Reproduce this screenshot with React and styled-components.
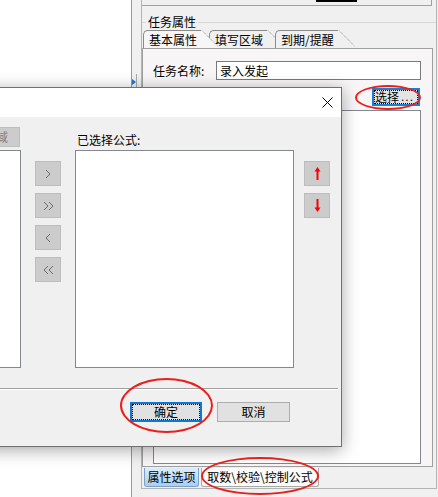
import React from "react";
import styled, { createGlobalStyle } from "styled-components";

const GlobalStyle = createGlobalStyle`
  html, body {
    margin: 0;
    padding: 0;
    background: #fff;
    overflow: hidden;
  }
  body {
    font-family: "Noto Sans CJK SC", "Liberation Sans", sans-serif;
    font-size: 12px;
    color: #000;
  }
`;

const Chevron = ({ dir = "right", double }) => {
  const one = (x) =>
    dir === "right" ? `M${x} 1 L${x + 4} 5 L${x} 9` : `M${x + 4} 1 L${x} 5 L${x + 4} 9`;
  return (
    <svg width={double ? 11 : 6} height="10" viewBox={`0 0 ${double ? 11 : 6} 10`}>
      <path d={one(1)} fill="none" stroke="#6b6b6b" strokeWidth="1" />
      {double && <path d={one(6)} fill="none" stroke="#6b6b6b" strokeWidth="1" />}
    </svg>
  );
};

const RedArrow = ({ down }) => (
  <svg width="7" height="13" viewBox="0 0 7 13" style={down ? { transform: "scaleY(-1)" } : null}>
    <polygon points="3.5,0 6.5,4.5 0.5,4.5" fill="#ff0000" />
    <rect x="2.5" y="3" width="2" height="10" fill="#ff0000" />
  </svg>
);

const TabSlant = ({ bg }) => (
  <svg width="17" height="18" viewBox="0 0 17 18">
    <polygon points="0,0 1,0 17,17 17,18 0,18" fill={bg} />
    <path d="M1 0.5 L17 16.5" stroke="#8a8a8a" strokeWidth="1" strokeDasharray="1 1" />
  </svg>
);

export default function App() {
  return (
    <Screen>
      <GlobalStyle />
      <Canvas />
      <Splitter>
        <Handle>
          <svg width="4" height="6" viewBox="0 0 4 6">
            <polygon points="0,0 4,3 0,6" fill="#1f74d4" />
          </svg>
        </Handle>
      </Splitter>

      <SidePanel>
        <OuterFrame>
          <TopBox>
            <Bar />
          </TopBox>
          <Group>
            <Legend>任务属性</Legend>
            <TabStrip>
              <Tab active first>
                <TabLabel active>基本属性</TabLabel>
                <TabSlant bg="#f7f5f6" />
              </Tab>
              <Tab>
                <TabLabel>填写区域</TabLabel>
                <TabSlant bg="#f0f0f0" />
              </Tab>
              <Tab>
                <TabLabel>到期/提醒</TabLabel>
                <TabSlant bg="#f0f0f0" />
              </Tab>
            </TabStrip>
            <TabPanel>
              <FieldRow>
                <FieldLabel>任务名称:</FieldLabel>
                <TextBox>录入发起</TextBox>
              </FieldRow>
              <ActionRow>
                <FocusButton>选择<Dots>...</Dots></FocusButton>
              </ActionRow>
              <FormulaList />
            </TabPanel>
          </Group>
          <BottomTabs>
            <BottomTab active w={55}>属性选项</BottomTab>
            <BottomTab w={118}>取数\校验\控制公式</BottomTab>
          </BottomTabs>
        </OuterFrame>
      </SidePanel>

      <Dialog>
        <TitleBar>
          <svg width="11" height="11" viewBox="0 0 11 11">
            <path d="M0.5 0.5 L10.5 10.5 M10.5 0.5 L0.5 10.5" stroke="#000" strokeWidth="1" />
          </svg>
        </TitleBar>
        <DialogBody>
          <Column w={206}>
            <ColumnHead align="flex-end">
              <DisabledButton>选择区域</DisabledButton>
            </ColumnHead>
            <ListBox />
          </Column>
          <ArrowColumn gap={14}>
            <ArrowButton><Chevron /></ArrowButton>
            <ArrowButton><Chevron double /></ArrowButton>
            <ArrowButton><Chevron dir="left" /></ArrowButton>
            <ArrowButton><Chevron dir="left" double /></ArrowButton>
          </ArrowColumn>
          <Column w={219} gap={14}>
            <ColumnHead>
              <HeadLabel>已选择公式:</HeadLabel>
            </ColumnHead>
            <ListBox />
          </Column>
          <ArrowColumn gap={10}>
            <ArrowButton><RedArrow /></ArrowButton>
            <ArrowButton><RedArrow down /></ArrowButton>
          </ArrowColumn>
        </DialogBody>
        <Separator />
        <DialogFooter>
          <DialogButton w={72} focused>确定</DialogButton>
          <DialogButton w={73}>取消</DialogButton>
        </DialogFooter>
      </Dialog>

      <Ring x={355} y={85} w={66} h={25} />
      <Ring x={120} y={378} w={93} h={55} />
      <Ring x={201} y={457} w={118} h={38} />
    </Screen>
  );
}

const Screen = styled.div`
  position: relative;
  width: 438px;
  height: 497px;
  display: flex;
  overflow: hidden;
  background: #fff;
`;

const Canvas = styled.div`
  width: 131px;
  flex: none;
  background: #fff;
`;

const Splitter = styled.div`
  width: 6px;
  flex: none;
  box-sizing: border-box;
  border-left: 1px solid #9a9a9a;
  background: #f0f0f0;
`;

const Handle = styled.div`
  margin-top: 74px;
  height: 60px;
  border-right: 1px solid #a8a8a8;
  display: flex;
  justify-content: center;
  padding-top: 5px;
  box-sizing: border-box;
`;

const SidePanel = styled.div`
  flex: 1;
  background: #f0f0f0;
  padding-left: 4px;
`;

const OuterFrame = styled.div`
  width: 296px;
  height: 489px;
  box-sizing: border-box;
  border: 1px solid #b4b4b4;
  border-top: none;
  display: flex;
  flex-direction: column;
`;

const TopBox = styled.div`
  height: 6px;
  flex: none;
  margin-right: 4px;
  box-sizing: border-box;
  border-right: 1px solid #a0a0a0;
  border-bottom: 1px solid #a0a0a0;
  background: #f0f0f0;
`;

const Bar = styled.div`
  margin-left: 174px;
  width: 41px;
  height: 2px;
  background: #000;
`;

const Group = styled.fieldset`
  margin: 9px 0 0;
  padding: 0;
  border: none;
  border-top: 1px solid #d8d8d8;
  min-width: 0;
  flex: 1;
  display: flex;
  flex-direction: column;
`;

const Legend = styled.legend`
  margin-left: 4px;
  padding: 0 2px;
  line-height: 14px;
`;

const TabStrip = styled.div`
  margin-top: 1px;
  height: 18px;
  display: flex;
  padding-left: 1px;
  flex: none;
`;

const Tab = styled.div`
  display: flex;
  position: relative;
  z-index: ${({ active }) => (active ? 2 : 1)};
  margin-left: ${({ first }) => (first ? 0 : -9)}px;
  height: ${({ active }) => (active ? 19 : 18)}px;
`;

const TabLabel = styled.div`
  height: 18px;
  box-sizing: border-box;
  padding: 0 4px 0 5px;
  line-height: 17px;
  border-left: 1px solid #8a8a8a;
  border-top: 1px solid #8a8a8a;
  border-top-left-radius: 5px;
  background: ${({ active }) => (active ? "#f7f5f6" : "#f0f0f0")};
  white-space: nowrap;
`;

const TabPanel = styled.div`
  flex: 1;
  margin: 0 3px 1px 0;
  border: 1px solid #a0a0a0;
  background: #f7f5f6;
  padding: 12px 11px 0 10px;
  display: flex;
  flex-direction: column;
`;

const FieldRow = styled.div`
  display: flex;
  align-items: center;
`;

const FieldLabel = styled.div`
  width: 63px;
  flex: none;
`;

const TextBox = styled.div`
  flex: 1;
  height: 19px;
  box-sizing: border-box;
  border: 1px solid #7a7a7a;
  background: #fff;
  padding-left: 3px;
  line-height: 17px;
`;

const ActionRow = styled.div`
  display: flex;
  justify-content: flex-end;
  margin-top: 8px;
  padding-right: 1px;
`;

const FocusButton = styled.div`
  width: 48px;
  height: 18px;
  box-sizing: border-box;
  border: 2px solid #1a7fd6;
  background: #e4e4e4;
  outline: 1px dotted #000;
  outline-offset: -3px;
  line-height: 14px;
  padding-left: 1px;
  white-space: nowrap;
  display: flex;
`;

const Dots = styled.span`
  font-family: "Liberation Sans", sans-serif;
  letter-spacing: 1px;
  margin-left: 2px;
`;

const FormulaList = styled.div`
  flex: 1;
  margin: 4px 0 2px;
  border: 1px solid #828790;
  background: #fff;
`;

const BottomTabs = styled.div`
  height: 20px;
  flex: none;
  display: flex;
  padding-left: 2px;
  gap: 2px;
`;

const BottomTab = styled.div`
  width: ${({ w }) => w}px;
  height: 19px;
  box-sizing: border-box;
  border: 1px solid ${({ active }) => (active ? "#7c9fc8" : "#a8a8a8")};
  border-top: none;
  border-radius: 0 0 3px 3px;
  background: ${({ active }) =>
    active ? "linear-gradient(#dcedfc, #a7d0f3)" : "#fbfbfb"};
  line-height: 18px;
  text-align: center;
  white-space: nowrap;
`;

const Dialog = styled.div`
  position: absolute;
  left: -200px;
  top: 87px;
  width: 542px;
  height: 360px;
  box-sizing: border-box;
  border: 1px solid #707070;
  background: #f0f0f0;
  box-shadow: 0 3px 16px rgba(0, 0, 0, 0.35);
  display: flex;
  flex-direction: column;
  z-index: 5;
`;

const TitleBar = styled.div`
  height: 29px;
  flex: none;
  background: #fff;
  display: flex;
  align-items: center;
  justify-content: flex-end;
  padding-right: 8px;
`;

const DialogBody = styled.div`
  display: flex;
  padding: 10px 0 0 14px;
`;

const Column = styled.div`
  width: ${({ w }) => w}px;
  margin-left: ${({ gap }) => gap || 0}px;
  display: flex;
  flex-direction: column;
`;

const ColumnHead = styled.div`
  height: 20px;
  display: flex;
  align-items: flex-end;
  justify-content: ${({ align }) => align || "flex-start"};
`;

const DisabledButton = styled.div`
  width: 72px;
  height: 20px;
  box-sizing: border-box;
  margin-right: 1px;
  border: 1px solid #bfbfbf;
  background: #cccccc;
  color: #838383;
  text-align: center;
  line-height: 18px;
`;

const HeadLabel = styled.div`
  line-height: 14px;
  padding-left: 2px;
`;

const ListBox = styled.div`
  margin-top: 3px;
  height: 218px;
  box-sizing: border-box;
  border: 1px solid #828790;
  background: #fff;
`;

const ArrowColumn = styled.div`
  margin-left: ${({ gap }) => gap}px;
  padding-top: 34px;
  display: flex;
  flex-direction: column;
  gap: 7px;
`;

const ArrowButton = styled.div`
  width: 26px;
  height: 25px;
  box-sizing: border-box;
  border: 1px solid #bdbdbd;
  background: #cccccc;
  display: flex;
  align-items: center;
  justify-content: center;
`;

const Separator = styled.div`
  margin: 20px 3px 0 0;
  height: 1px;
  background: #a0a0a0;
  box-shadow: 0 1px 0 #fff;
`;

const DialogFooter = styled.div`
  margin-top: 13px;
  display: flex;
  justify-content: flex-end;
  gap: 15px;
  padding-right: 51px;
`;

const DialogButton = styled.div`
  width: ${({ w }) => w}px;
  height: 20px;
  box-sizing: border-box;
  border: ${({ focused }) => (focused ? "2px solid #0a78d7" : "1px solid #adadad")};
  outline: ${({ focused }) => (focused ? "1px dotted #000" : "none")};
  outline-offset: -3px;
  background: #e1e1e1;
  text-align: center;
  line-height: ${({ focused }) => (focused ? 16 : 18)}px;
`;

const Ring = styled.div`
  position: absolute;
  left: ${({ x }) => x}px;
  top: ${({ y }) => y}px;
  width: ${({ w }) => w}px;
  height: ${({ h }) => h}px;
  box-sizing: border-box;
  border: 2.5px solid #e8201c;
  border-radius: 50%;
  z-index: 10;
  pointer-events: none;
`;
